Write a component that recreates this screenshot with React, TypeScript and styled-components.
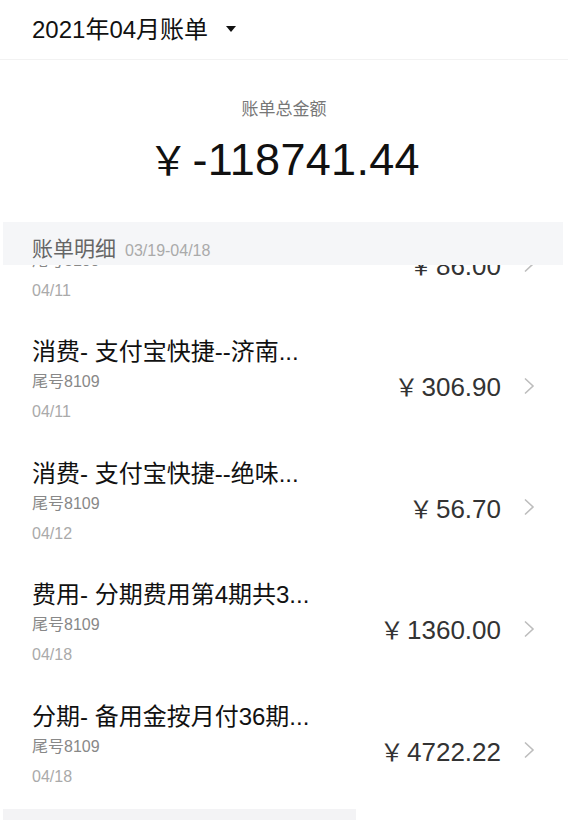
import React from 'react';
import styled, { createGlobalStyle } from 'styled-components';

const GlobalStyle = createGlobalStyle`
  html, body {
    margin: 0;
    padding: 0;
    background: #ffffff;
  }
  body {
    font-family: "Liberation Sans", "Noto Sans CJK SC", sans-serif;
    color: #222;
  }
`;

interface BillItem {
  title: string;
  card: string;
  date: string;
  amount: string;
}

const items: BillItem[] = [
  { title: '消费- 支付宝快捷--杭州...', card: '尾号8109', date: '04/11', amount: '86.00' },
  { title: '消费- 支付宝快捷--济南...', card: '尾号8109', date: '04/11', amount: '306.90' },
  { title: '消费- 支付宝快捷--绝味...', card: '尾号8109', date: '04/12', amount: '56.70' },
  { title: '费用- 分期费用第4期共3...', card: '尾号8109', date: '04/18', amount: '1360.00' },
  { title: '分期- 备用金按月付36期...', card: '尾号8109', date: '04/18', amount: '4722.22' },
];

const Page = styled.div`
  width: 568px;
  height: 821px;
  overflow: hidden;
  display: flex;
  flex-direction: column;
  background: #fff;
`;

const Header = styled.div`
  height: 60px;
  box-sizing: border-box;
  display: flex;
  align-items: center;
  gap: 18px;
  padding: 0 32px 4px;
  border-bottom: 1px solid #f2f2f2;
`;

const HeaderTitle = styled.span`
  font-size: 24px;
  color: #111;
`;

const Caret = styled.span`
  width: 0;
  height: 0;
  border-left: 5px solid transparent;
  border-right: 5px solid transparent;
  border-top: 6px solid #111;
  margin-top: 2px;
`;

const Summary = styled.div`
  display: flex;
  flex-direction: column;
  align-items: center;
  padding-top: 40px;
  height: 162px;
  box-sizing: border-box;
`;

const SummaryLabel = styled.div`
  font-size: 17px;
  line-height: 20px;
  color: #777;
`;

const SummaryAmount = styled.div`
  margin-top: 11px;
  font-size: 45px;
  line-height: 54px;
  color: #111;
  letter-spacing: 0.3px;
`;

const BigYen = styled.span`
  font-family: "Noto Sans CJK SC", sans-serif;
  font-size: 40px;
  margin-right: 4px;
`;

const SectionBar = styled.div`
  height: 43px;
  margin: 0 5px 0 3px;
  background: #f5f6f8;
  display: flex;
  align-items: flex-end;
  gap: 9px;
  padding: 0 0 3px 29px;
  box-sizing: border-box;
`;

const SectionTitle = styled.span`
  font-size: 21px;
  color: #666;
`;

const SectionRange = styled.span`
  font-size: 16px;
  color: #aaa;
  margin-bottom: 2px;
`;

const ListViewport = styled.div`
  height: 542px;
  overflow: hidden;
`;

const ListInner = styled.div<{ $scroll: number }>`
  margin-top: ${(p) => -p.$scroll}px;
`;

const Row = styled.div`
  height: 121.5px;
  box-sizing: border-box;
  padding: 16px 33px 0 32px;
  display: flex;
  align-items: center;
`;

const RowInfo = styled.div`
  flex: 1;
  align-self: flex-start;
  display: flex;
  flex-direction: column;
`;

const RowTitle = styled.div`
  font-size: 24px;
  line-height: 30px;
  color: #111;
  white-space: nowrap;
`;

const RowCard = styled.div`
  font-size: 16px;
  line-height: 30px;
  color: #888;
`;

const RowDate = styled.div`
  font-size: 16px;
  line-height: 30px;
  color: #aaa;
`;

const RowAmount = styled.div`
  display: flex;
  align-items: center;
  gap: 22px;
  margin-top: -8px;
`;

const AmountText = styled.span`
  font-size: 26px;
  color: #333;
`;

const Yen = styled.span`
  font-family: "Noto Sans CJK SC", sans-serif;
  font-size: 24px;
  margin-right: 3px;
`;

const Chevron = () => (
  <svg width="12" height="18" viewBox="0 0 12 18" fill="none">
    <path d="M2 1.5 L10 9 L2 16.5" stroke="#bdbdbd" strokeWidth="1.6" />
  </svg>
);

const BottomBar = styled.div`
  height: 11px;
  width: 353px;
  margin: 2px 0 0 3px;
  background: #f3f3f5;
`;

export default function App() {
  return (
    <>
      <GlobalStyle />
      <Page>
        <Header>
          <HeaderTitle>2021年04月账单</HeaderTitle>
          <Caret />
        </Header>
        <Summary>
          <SummaryLabel>账单总金额</SummaryLabel>
          <SummaryAmount>
            <BigYen>￥</BigYen>-118741.44
          </SummaryAmount>
        </Summary>
        <SectionBar>
          <SectionTitle>账单明细</SectionTitle>
          <SectionRange>03/19-04/18</SectionRange>
        </SectionBar>
        <ListViewport>
          <ListInner $scroll={65.5}>
            {items.map((item, i) => (
              <Row key={i}>
                <RowInfo>
                  <RowTitle>{item.title}</RowTitle>
                  <RowCard>{item.card}</RowCard>
                  <RowDate>{item.date}</RowDate>
                </RowInfo>
                <RowAmount>
                  <AmountText>
                    <Yen>￥</Yen>
                    {item.amount}
                  </AmountText>
                  <Chevron />
                </RowAmount>
              </Row>
            ))}
          </ListInner>
        </ListViewport>
        <BottomBar />
      </Page>
    </>
  );
}
